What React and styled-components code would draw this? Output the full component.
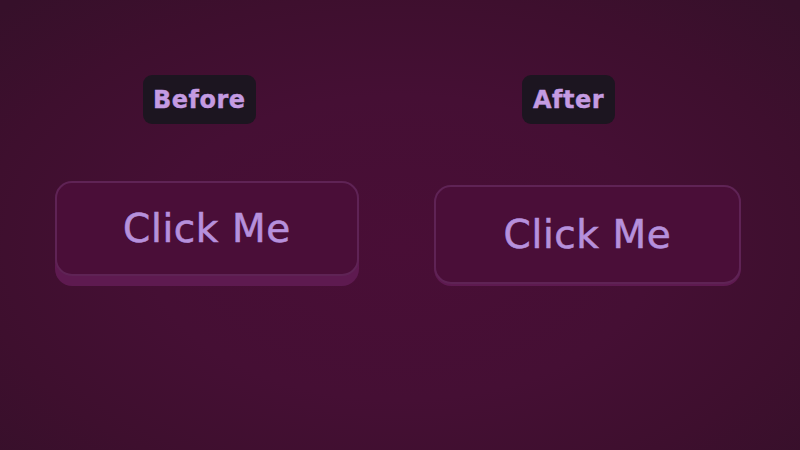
import React from "react";
import styled, { createGlobalStyle } from "styled-components";

const Global = createGlobalStyle`
  html, body { margin: 0; padding: 0; }
  body {
    width: 800px;
    height: 450px;
    overflow: hidden;
    background: radial-gradient(ellipse 70% 75% at 50% 55%, #490e36 0%, #450f34 45%, #3e0f2e 75%, #36102a 100%);
    font-family: "DejaVu Sans", "Open Sans", sans-serif;
  }
`;

const Stage = styled.div`
  display: flex;
  align-items: flex-start;
  gap: 75px;
  padding: 75px 0 0 55px;
  box-sizing: border-box;
  height: 450px;
`;

const Column = styled.div`
  display: flex;
  flex-direction: column;
  align-items: flex-start;
`;

const Label = styled.div`
  margin-left: 88px;
  height: 49px;
  padding: 0 ${(p) => p.$pad}px;
  display: inline-flex;
  align-items: center;
  justify-content: center;
  box-sizing: border-box;
  background: #1c1520;
  border-radius: 9px;
  color: #c49be2;
  font-weight: 700;
  font-size: 24px;
  letter-spacing: 0.5px;
  -webkit-text-stroke: 0.4px #c49be2;
`;

const Button = styled.button`
  margin-top: ${(p) => p.$top}px;
  width: ${(p) => p.$w}px;
  height: ${(p) => p.$h}px;
  box-sizing: border-box;
  border: 2px solid #5f2355;
  border-radius: 17px;
  background: #4a0e38;
  box-shadow: 0 ${(p) => p.$ledge}px 0 #5e1a50;
  color: #b690dc;
  font-family: "DejaVu Sans", "Open Sans", sans-serif;
  font-size: 39px;
  font-weight: 400;
  letter-spacing: 0.6px;
  -webkit-text-stroke: 0.6px #b690dc;
  display: flex;
  align-items: center;
  justify-content: center;
  padding: 0;
  cursor: pointer;
`;

export default function App() {
  return (
    <>
      <Global />
      <Stage>
        <Column>
          <Label $pad={10}>Before</Label>
          <Button $top={57} $w={304} $h={95} $ledge={10}>Click Me</Button>
        </Column>
        <Column>
          <Label $pad={11}>After</Label>
          <Button $top={61} $w={307} $h={99} $ledge={2}>Click Me</Button>
        </Column>
      </Stage>
    </>
  );
}
